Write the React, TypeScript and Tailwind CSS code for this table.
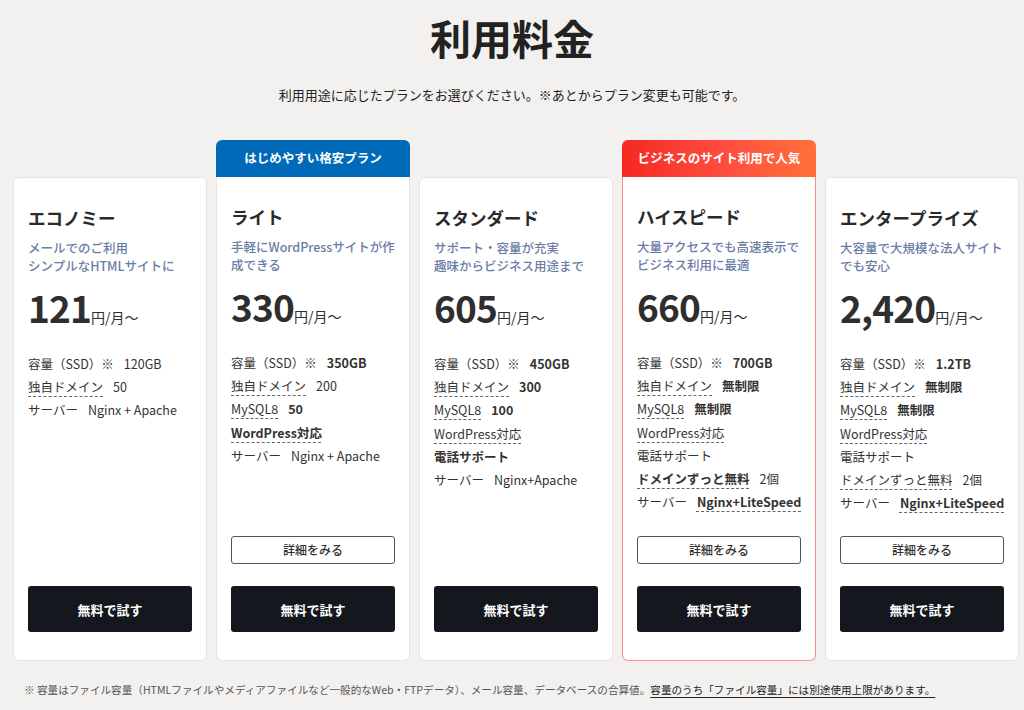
import React from 'react'

type Spec = {
  label: string
  value?: string
  labelBold?: boolean
  valueBold?: boolean
  labelDash?: boolean
  valueDash?: boolean
}

type Plan = {
  name: string
  desc: string[]
  price: string
  specs: Spec[]
  badge?: 'blue' | 'red'
  badgeText?: string
  detail: boolean
}

const plans: Plan[] = [
  {
    name: 'エコノミー',
    desc: ['メールでのご利用', 'シンプルなHTMLサイトに'],
    price: '121',
    detail: false,
    specs: [
      { label: '容量（SSD）※', value: '120GB' },
      { label: '独自ドメイン', value: '50', labelDash: true },
      { label: 'サーバー', value: 'Nginx + Apache' },
    ],
  },
  {
    name: 'ライト',
    desc: ['手軽にWordPressサイトが作', '成できる'],
    price: '330',
    detail: true,
    badge: 'blue',
    badgeText: 'はじめやすい格安プラン',
    specs: [
      { label: '容量（SSD）※', value: '350GB', valueBold: true },
      { label: '独自ドメイン', value: '200', labelDash: true },
      { label: 'MySQL8', value: '50', labelDash: true, valueBold: true },
      { label: 'WordPress対応', labelDash: true, labelBold: true },
      { label: 'サーバー', value: 'Nginx + Apache' },
    ],
  },
  {
    name: 'スタンダード',
    desc: ['サポート・容量が充実', '趣味からビジネス用途まで'],
    price: '605',
    detail: false,
    specs: [
      { label: '容量（SSD）※', value: '450GB', valueBold: true },
      { label: '独自ドメイン', value: '300', labelDash: true, valueBold: true },
      { label: 'MySQL8', value: '100', labelDash: true, valueBold: true },
      { label: 'WordPress対応', labelDash: true },
      { label: '電話サポート', labelBold: true },
      { label: 'サーバー', value: 'Nginx+Apache' },
    ],
  },
  {
    name: 'ハイスピード',
    desc: ['大量アクセスでも高速表示で', 'ビジネス利用に最適'],
    price: '660',
    detail: true,
    badge: 'red',
    badgeText: 'ビジネスのサイト利用で人気',
    specs: [
      { label: '容量（SSD）※', value: '700GB', valueBold: true },
      { label: '独自ドメイン', value: '無制限', labelDash: true, valueBold: true },
      { label: 'MySQL8', value: '無制限', labelDash: true, valueBold: true },
      { label: 'WordPress対応', labelDash: true },
      { label: '電話サポート' },
      { label: 'ドメインずっと無料', value: '2個', labelDash: true, labelBold: true },
      { label: 'サーバー', value: 'Nginx+LiteSpeed', valueBold: true, valueDash: true },
    ],
  },
  {
    name: 'エンタープライズ',
    desc: ['大容量で大規模な法人サイト', 'でも安心'],
    price: '2,420',
    detail: true,
    specs: [
      { label: '容量（SSD）※', value: '1.2TB', valueBold: true },
      { label: '独自ドメイン', value: '無制限', labelDash: true, valueBold: true },
      { label: 'MySQL8', value: '無制限', labelDash: true, valueBold: true },
      { label: 'WordPress対応', labelDash: true },
      { label: '電話サポート' },
      { label: 'ドメインずっと無料', value: '2個', labelDash: true },
      { label: 'サーバー', value: 'Nginx+LiteSpeed', valueBold: true, valueDash: true },
    ],
  },
]

const dash = 'underline decoration-dashed decoration-[#666] decoration-1 underline-offset-[4px]'

function SpecRow({ s }: { s: Spec }) {
  return (
    <li className="whitespace-nowrap">
      <span className={`${s.labelBold ? 'font-bold' : ''} ${s.labelDash ? dash : ''}`}>{s.label}</span>
      {s.value && (
        <span className={`ml-[10px] ${s.valueBold ? 'font-bold' : ''} ${s.valueDash ? dash : ''}`}>{s.value}</span>
      )}
    </li>
  )
}

function PlanCard({ p }: { p: Plan }) {
  const body =
    p.badge === 'red'
      ? 'border-[1.5px] border-t-0 border-[#f6908a] rounded-b-[6px]'
      : p.badge === 'blue'
        ? 'border border-t-0 border-[#e8e4e2] rounded-b-[6px]'
        : 'border border-[#e8e4e2] rounded-[6px]'
  return (
    <div className="flex flex-col">
      {p.badge ? (
        <div
          className={`h-[37px] flex items-center justify-center rounded-t-[6px] text-white font-bold text-[12.5px] ${
            p.badge === 'blue' ? 'bg-[#006ab8]' : 'bg-gradient-to-r from-[#f5281f] via-[#ff4a3f] to-[#ff703a]'
          }`}
        >
          {p.badgeText}
        </div>
      ) : (
        <div className="h-[37px]" />
      )}
      <div className={`flex-1 flex flex-col bg-white px-[14px] pt-[27px] pb-[28px] ${body}`}>
        <h2 className="text-[17.5px] leading-[26px] font-bold text-[#2a2a2a]">{p.name}</h2>
        <p className="mt-[8px] text-[12.5px] leading-[18px] text-[#6a7ca6] font-medium">
          {p.desc.map((d) => (
            <span key={d} className="block whitespace-nowrap">
              {d}
            </span>
          ))}
        </p>
        <div className="mt-[10px] leading-[44px] text-[#2e2e2e] whitespace-nowrap">
          <span className="text-[37px] font-bold tracking-[-0.8px]">{p.price}</span>
          <span className="text-[14px]">円/月〜</span>
        </div>
        <ul className="mt-[13px] text-[12.5px] leading-[23.2px] text-[#333]">
          {p.specs.map((s) => (
            <SpecRow key={s.label} s={s} />
          ))}
        </ul>
        <div className="mt-auto pt-[22px] flex flex-col">
          {p.detail && (
            <button className="h-[28px] mb-[22px] rounded-[3px] border border-[#4b5563] bg-white text-[12px] font-medium text-[#333]">
              詳細をみる
            </button>
          )}
          <button className="h-[46px] rounded-[3px] bg-[#14171d] text-white text-[13px] font-bold">無料で試す</button>
        </div>
      </div>
    </div>
  )
}

export default function App() {
  return (
    <div
      className="min-h-[710px] bg-[#f2f1ef] text-[#222] pt-[13px]"
      style={{ fontFamily: '"Noto Sans CJK JP", "Noto Sans", sans-serif' }}
    >
      <h1 className="text-center text-[41px] leading-[48px] font-bold text-[#222]">利用料金</h1>
      <p className="mt-[24px] text-center text-[13px] leading-[20px] text-[#222]">
        利用用途に応じたプランをお選びください。※あとからプラン変更も可能です。
      </p>
      <div className="mt-[35px] grid grid-cols-5 gap-[9px] pl-[13px] pr-[5px]">
        {plans.map((p) => (
          <PlanCard key={p.name} p={p} />
        ))}
      </div>
      <p className="mt-[21px] pl-[24px] text-[10.6px] leading-[16px] text-[#555] whitespace-nowrap">
        ※ 容量はファイル容量（HTMLファイルやメディアファイルなど一般的なWeb・FTPデータ）、メール容量、データベースの合算値。
        <a href="#" className="text-[#222] underline underline-offset-[3px]">
          容量のうち「ファイル容量」には別途使用上限があります。
        </a>
      </p>
    </div>
  )
}
